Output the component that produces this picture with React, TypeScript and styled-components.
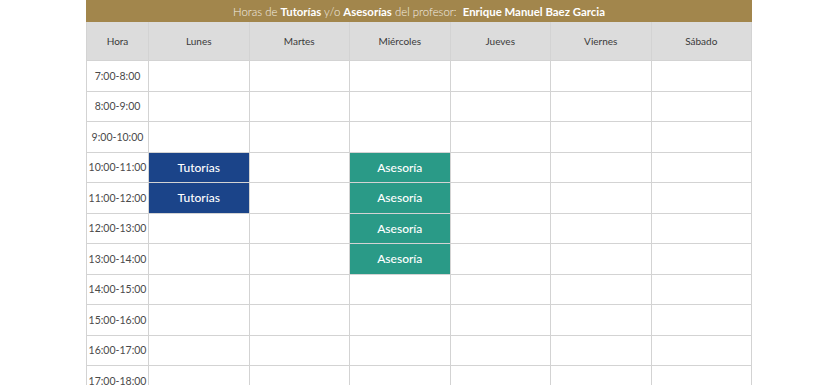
import React from 'react'
import styled, { createGlobalStyle } from 'styled-components'

const GlobalStyle = createGlobalStyle`
  html, body {
    margin: 0;
    padding: 0;
    background: #fff;
  }
  body {
    font-family: Lato, "Open Sans", "Noto Sans", sans-serif;
  }
`

const days = ['Lunes', 'Martes', 'Miércoles', 'Jueves', 'Viernes', 'Sábado']

const hours = [
  '7:00-8:00', '8:00-9:00', '9:00-10:00', '10:00-11:00', '11:00-12:00',
  '12:00-13:00', '13:00-14:00', '14:00-15:00', '15:00-16:00', '16:00-17:00',
  '17:00-18:00'
]

type Kind = 'tutoria' | 'asesoria'

// [hour index, day index] -> kind
const slots: Record<string, Kind> = {
  '3-0': 'tutoria',
  '4-0': 'tutoria',
  '3-2': 'asesoria',
  '4-2': 'asesoria',
  '5-2': 'asesoria',
  '6-2': 'asesoria'
}

const labels: Record<Kind, string> = {
  tutoria: 'Tutorías',
  asesoria: 'Asesoría'
}

const App = () => {
  return (
    <>
      <GlobalStyle />
      <Page>
        <Schedule>
          <TitleBar>
            Horas de <b>Tutorías</b> y/o <b>Asesorías</b> del profesor:&nbsp; <b>Enrique Manuel Baez Garcia</b>
          </TitleBar>
          <Grid>
            <HeadCell>Hora</HeadCell>
            {days.map(d => <HeadCell key={d}>{d}</HeadCell>)}
            {hours.map((h, i) => (
              <React.Fragment key={h}>
                <HourCell>{h}</HourCell>
                {days.map((d, j) => {
                  const kind = slots[`${i}-${j}`]
                  return (
                    <Cell key={d} kind={kind}>
                      {kind ? labels[kind] : ''}
                    </Cell>
                  )
                })}
              </React.Fragment>
            ))}
          </Grid>
        </Schedule>
      </Page>
    </>
  )
}

export default App

const Page = styled.main`
  width: 840px;
  height: 385px;
  overflow: hidden;
  padding-left: 86px;
  box-sizing: border-box;
`

const Schedule = styled.section`
  width: 666px;
`

const TitleBar = styled.header`
  height: 22px;
  background-color: #a2864c;
  color: #f4efe4;
  font-size: 11.4px;
  font-weight: 300;
  display: flex;
  align-items: center;
  justify-content: center;
  white-space: pre;

  b {
    font-weight: 700;
    color: #fff;
  }
`

const Grid = styled.div`
  display: grid;
  grid-template-columns: 61px repeat(6, 1fr);
  grid-template-rows: 38px;
  grid-auto-rows: 29.5px;
  gap: 1px;
  padding: 0 1px 1px 1px;
  background-color: #d3d3d3;
`

const HeadCell = styled.div`
  background-color: #dcdcdc;
  color: #3a3a3a;
  font-size: 10px;
  display: flex;
  align-items: center;
  justify-content: center;
`

const HourCell = styled.div`
  background-color: #fff;
  color: #4a4a4a;
  font-size: 10.5px;
  display: flex;
  align-items: center;
  justify-content: center;
  white-space: nowrap;
`

const Cell = styled.div<{ kind?: Kind }>`
  background-color: ${props =>
    props.kind === 'tutoria' ? '#1b4489' : props.kind === 'asesoria' ? '#2a9a87' : '#fff'};
  color: #fff;
  font-size: 12px;
  font-weight: 500;
  display: flex;
  align-items: center;
  justify-content: center;
`
